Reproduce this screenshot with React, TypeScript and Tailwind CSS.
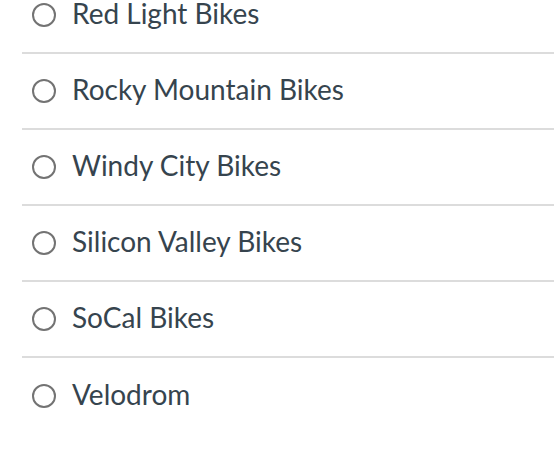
const options = [
  "Red Light Bikes",
  "Rocky Mountain Bikes",
  "Windy City Bikes",
  "Silicon Valley Bikes",
  "SoCal Bikes",
  "Velodrom",
];

export default function App() {
  return (
    <div className="w-[554px] h-[464px] bg-white overflow-hidden font-['Lato','Liberation_Sans',sans-serif]">
      <ul className="-mt-[22px] pl-[22px]">
        {options.map((label, i) => (
          <li
            key={label}
            className={`h-[76px] pb-[4px] flex items-center ${
              i < options.length - 1 ? "border-b-2 border-[#dcdcdc]" : ""
            }`}
          >
            <label className="flex items-center cursor-pointer">
              <span className="ml-[10px] mt-[4px] w-[24px] h-[24px] rounded-full border-2 border-[#737373] bg-white" />
              <span className="ml-[16px] text-[28px] font-normal text-[#36444e]">{label}</span>
            </label>
          </li>
        ))}
      </ul>
    </div>
  );
}
